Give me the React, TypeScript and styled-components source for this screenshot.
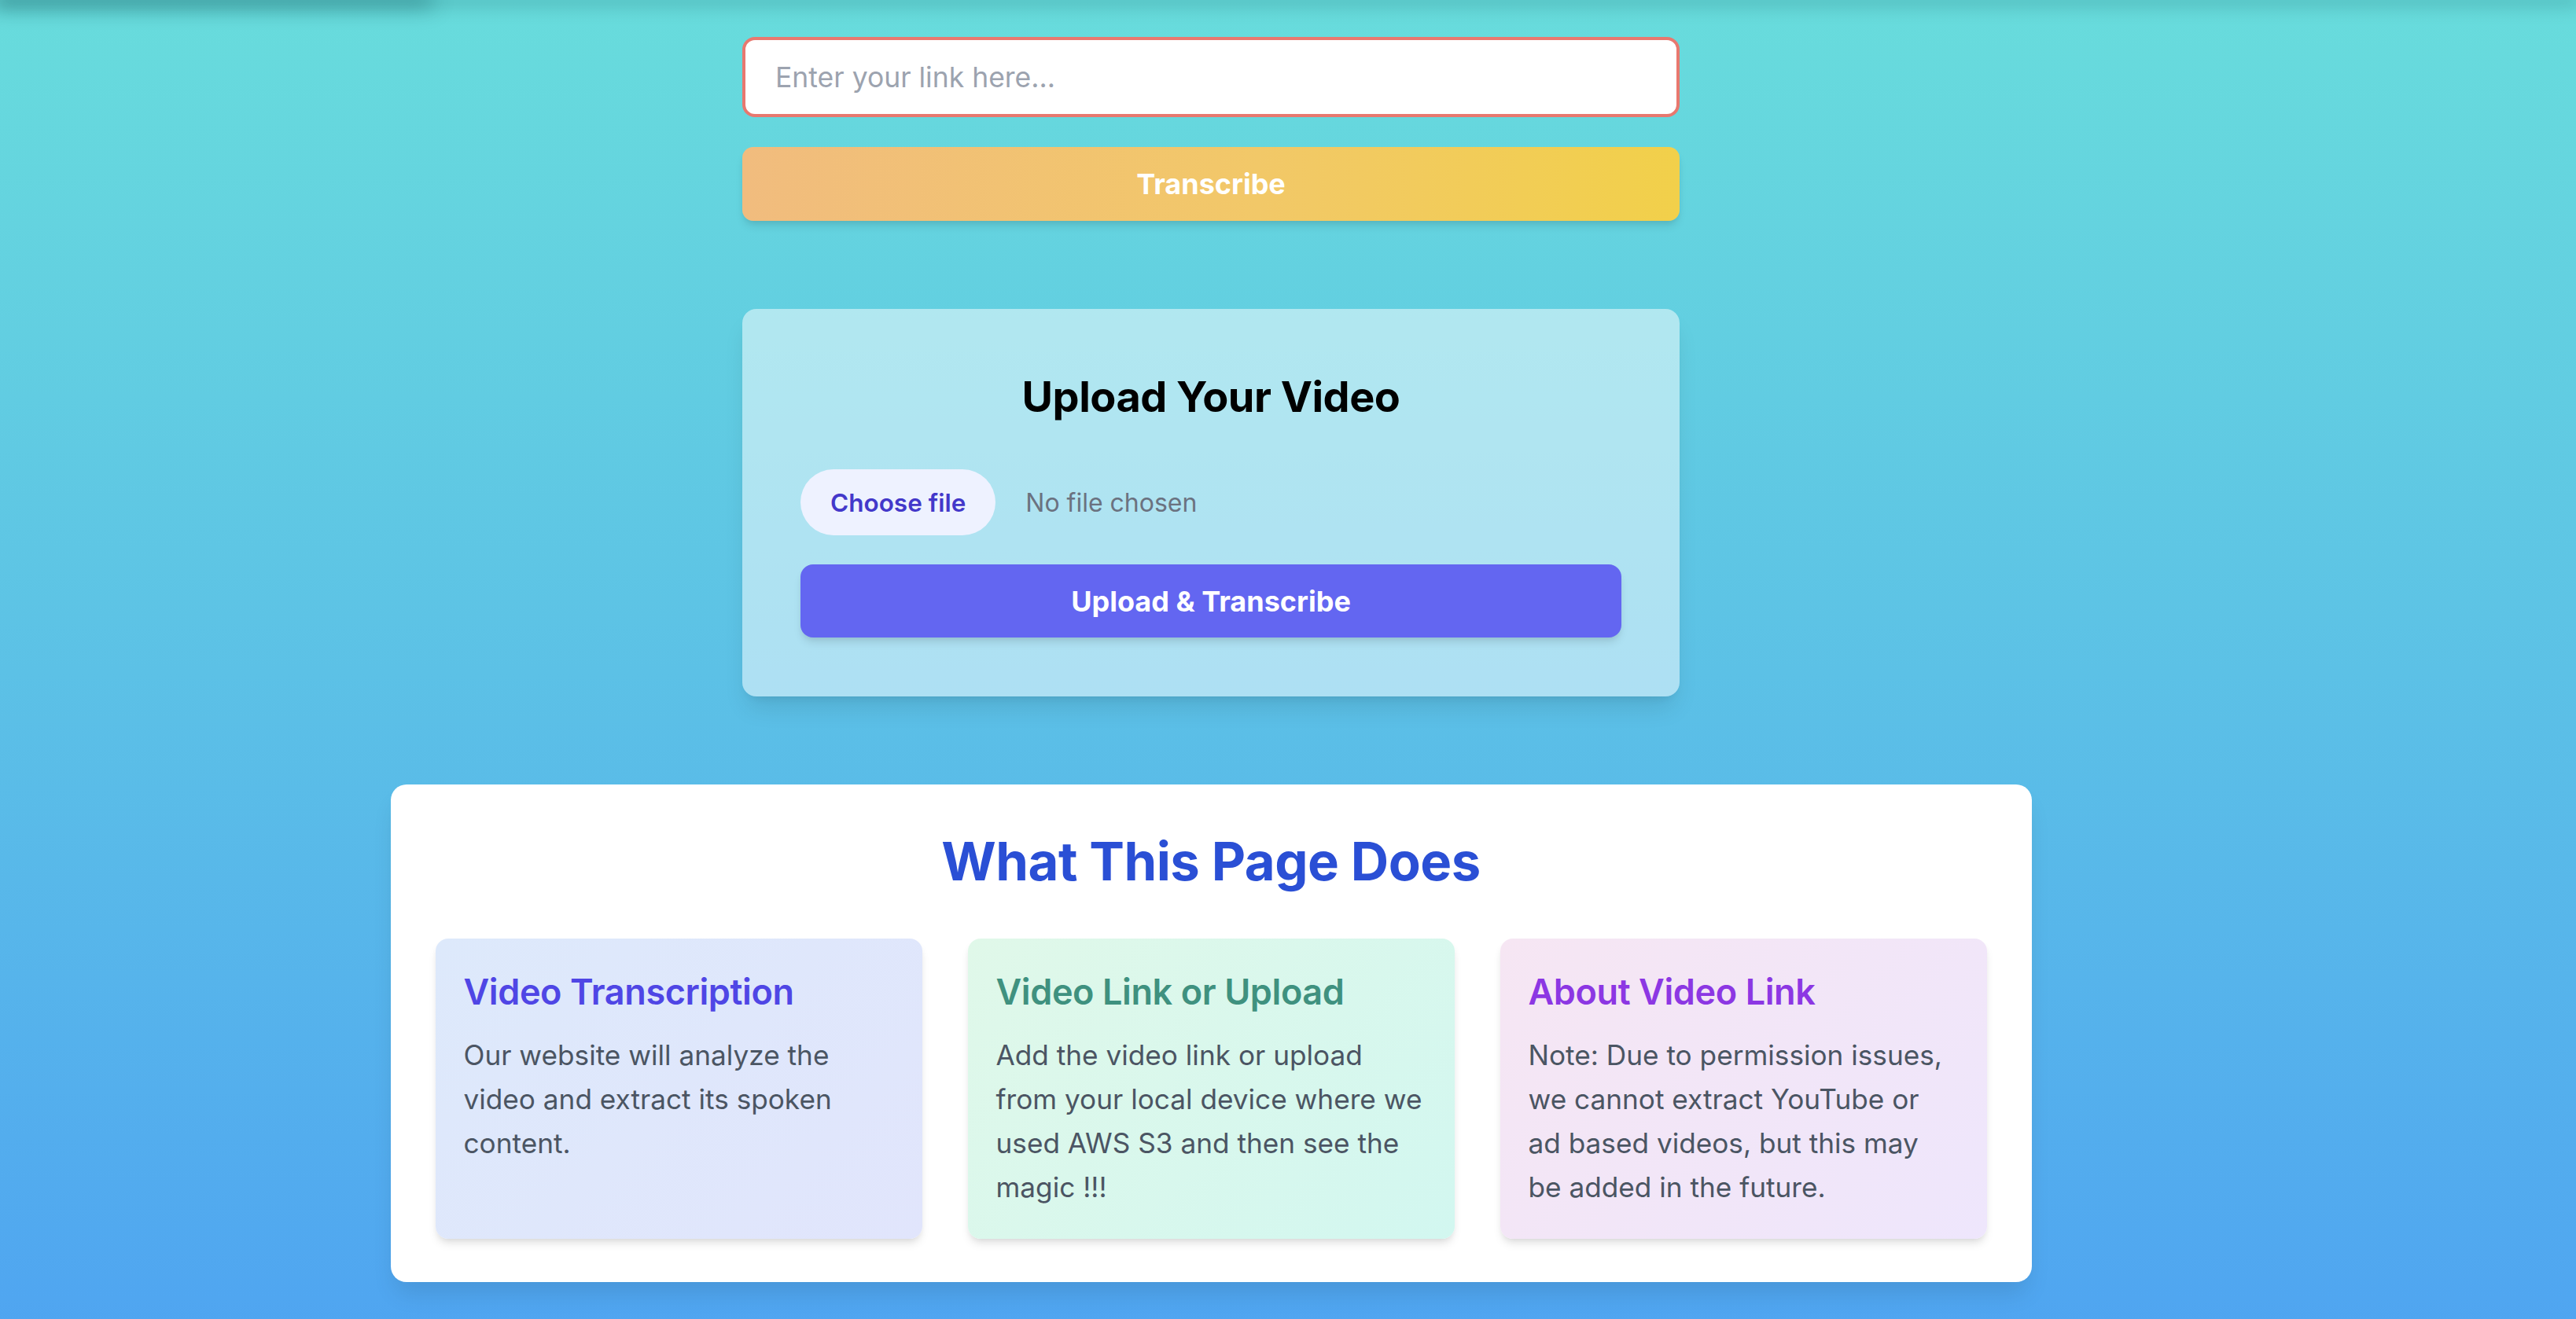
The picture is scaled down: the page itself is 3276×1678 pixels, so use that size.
import React from "react";
import styled, { createGlobalStyle } from "styled-components";

const GlobalStyle = createGlobalStyle`
  html, body {
    margin: 0;
    padding: 0;
  }
  body {
    font-family: Inter, "Noto Sans", "Liberation Sans", sans-serif;
    -webkit-font-smoothing: antialiased;
  }
  * {
    box-sizing: border-box;
  }
`;

// Layout
const Page = styled.div`
  min-height: 100vh;
  padding-bottom: 80px;
  background: linear-gradient(180deg, #68dcdc 0%, #5cc1e6 50%, #4fa4f1 100%);
`;

const TopShade = styled.div`
  height: 0;
  display: flex;
  box-shadow: 0 0 22px 6px rgba(20, 90, 95, 0.35);
`;

const TopShadeLeft = styled.div`
  width: 540px;
  height: 0;
  box-shadow: 0 0 26px 10px rgba(10, 70, 75, 0.35);
`;

const Main = styled.main`
  display: flex;
  flex-direction: column;
  align-items: center;
  padding: 47px 196px 0 0;
`;

// Link form
const LinkForm = styled.form`
  width: 1192px;
  display: flex;
  flex-direction: column;
  gap: 38px;
`;

const LinkInput = styled.input`
  height: 102px;
  padding: 0 38px;
  border: 4px solid #e8786f;
  border-radius: 16px;
  background: #fff;
  font-family: inherit;
  font-size: 35.5px;
  color: #1f2937;
  outline: none;

  &::placeholder {
    color: #9ca3af;
  }
`;

const TranscribeButton = styled.button`
  height: 94px;
  border: 0;
  border-radius: 14px;
  background: linear-gradient(90deg, #f1bc7e 0%, #f2c868 55%, #f2d04a 100%);
  color: #fff;
  font-family: inherit;
  font-size: 36px;
  font-weight: 700;
  box-shadow: 0 8px 12px -2px rgba(0, 0, 0, 0.1), 0 4px 8px -4px rgba(0, 0, 0, 0.1);
`;

// Upload card
const UploadCard = styled.section`
  width: 1192px;
  margin-top: 112px;
  padding: 80px 74px 75px;
  display: flex;
  flex-direction: column;
  border-radius: 18px;
  background: rgba(255, 255, 255, 0.5);
  box-shadow: 0 20px 30px -6px rgba(0, 0, 0, 0.1), 0 8px 12px -8px rgba(0, 0, 0, 0.1);
`;

const UploadTitle = styled.h2`
  margin: 0;
  text-align: center;
  font-size: 54px;
  line-height: 64px;
  font-weight: 700;
  color: #000;
  letter-spacing: -0.5px;
`;

const FileRow = styled.label`
  margin-top: 60px;
  display: flex;
  align-items: center;
  gap: 38px;
`;

const ChooseButton = styled.span`
  height: 84px;
  padding: 0 38px;
  display: inline-flex;
  align-items: center;
  border-radius: 999px;
  background: #eef2ff;
  color: #4338ca;
  font-size: 31.5px;
  font-weight: 600;
`;

const FileName = styled.span`
  color: #6b7280;
  font-size: 32px;
`;

const UploadButton = styled.button`
  margin-top: 37px;
  height: 93px;
  border: 0;
  border-radius: 16px;
  background: #6366f1;
  color: #fff;
  font-family: inherit;
  font-size: 36px;
  font-weight: 700;
  box-shadow: 0 8px 12px -2px rgba(0, 0, 0, 0.1), 0 4px 8px -4px rgba(0, 0, 0, 0.1);
`;

// About section
const AboutCard = styled.section`
  width: 2087px;
  margin-top: 112px;
  padding: 58px 57px 55px;
  border-radius: 20px;
  background: #fff;
  box-shadow: 0 20px 30px -6px rgba(0, 0, 0, 0.1);
`;

const AboutTitle = styled.h2`
  margin: 0 0 58px;
  text-align: center;
  font-size: 67px;
  line-height: 80px;
  font-weight: 700;
  color: #2a4fd5;
  letter-spacing: -0.5px;
`;

const FeatureGrid = styled.div`
  display: grid;
  grid-template-columns: repeat(3, 1fr);
  gap: 58px;
`;

const FeatureCard = styled.div<{ $from: string; $to: string }>`
  padding: 36px 40px 38px 36px;
  border-radius: 16px;
  background: linear-gradient(135deg, ${(p) => p.$from}, ${(p) => p.$to});
  box-shadow: 0 8px 12px -2px rgba(0, 0, 0, 0.1), 0 4px 8px -4px rgba(0, 0, 0, 0.1);
`;

const FeatureTitle = styled.h3<{ $color: string }>`
  margin: 0 0 20px;
  font-size: 45px;
  line-height: 64px;
  font-weight: 600;
  color: ${(p) => p.$color};
  letter-spacing: -0.4px;
`;

const FeatureText = styled.p`
  margin: 0;
  font-size: 35.2px;
  line-height: 56px;
  color: #4b5563;
`;

const features = [
  {
    title: "Video Transcription",
    text: "Our website will analyze the video and extract its spoken content.",
    color: "#4f46e5",
    from: "#dde9fb",
    to: "#e1e5fc",
  },
  {
    title: "Video Link or Upload",
    text: "Add the video link or upload from your local device where we used AWS S3 and then see the magic !!!",
    color: "#3f917f",
    from: "#e0f8e9",
    to: "#d2f7f0",
  },
  {
    title: "About Video Link",
    text: "Note: Due to permission issues, we cannot extract YouTube or ad based videos, but this may be added in the future.",
    color: "#8c37e3",
    from: "#f6e6f3",
    to: "#eee6fc",
  },
];

const App: React.FC = () => {
  return (
    <>
      <GlobalStyle />
      <Page>
        <TopShade>
          <TopShadeLeft />
        </TopShade>
        <Main>
          <LinkForm onSubmit={(e) => e.preventDefault()}>
            <LinkInput type="text" placeholder="Enter your link here..." />
            <TranscribeButton type="submit">Transcribe</TranscribeButton>
          </LinkForm>

          <UploadCard>
            <UploadTitle>Upload Your Video</UploadTitle>
            <FileRow>
              <ChooseButton>Choose file</ChooseButton>
              <FileName>No file chosen</FileName>
            </FileRow>
            <UploadButton type="button">Upload &amp; Transcribe</UploadButton>
          </UploadCard>

          <AboutCard>
            <AboutTitle>What This Page Does</AboutTitle>
            <FeatureGrid>
              {features.map((f) => (
                <FeatureCard key={f.title} $from={f.from} $to={f.to}>
                  <FeatureTitle $color={f.color}>{f.title}</FeatureTitle>
                  <FeatureText>{f.text}</FeatureText>
                </FeatureCard>
              ))}
            </FeatureGrid>
          </AboutCard>
        </Main>
      </Page>
    </>
  );
};

export default App;
